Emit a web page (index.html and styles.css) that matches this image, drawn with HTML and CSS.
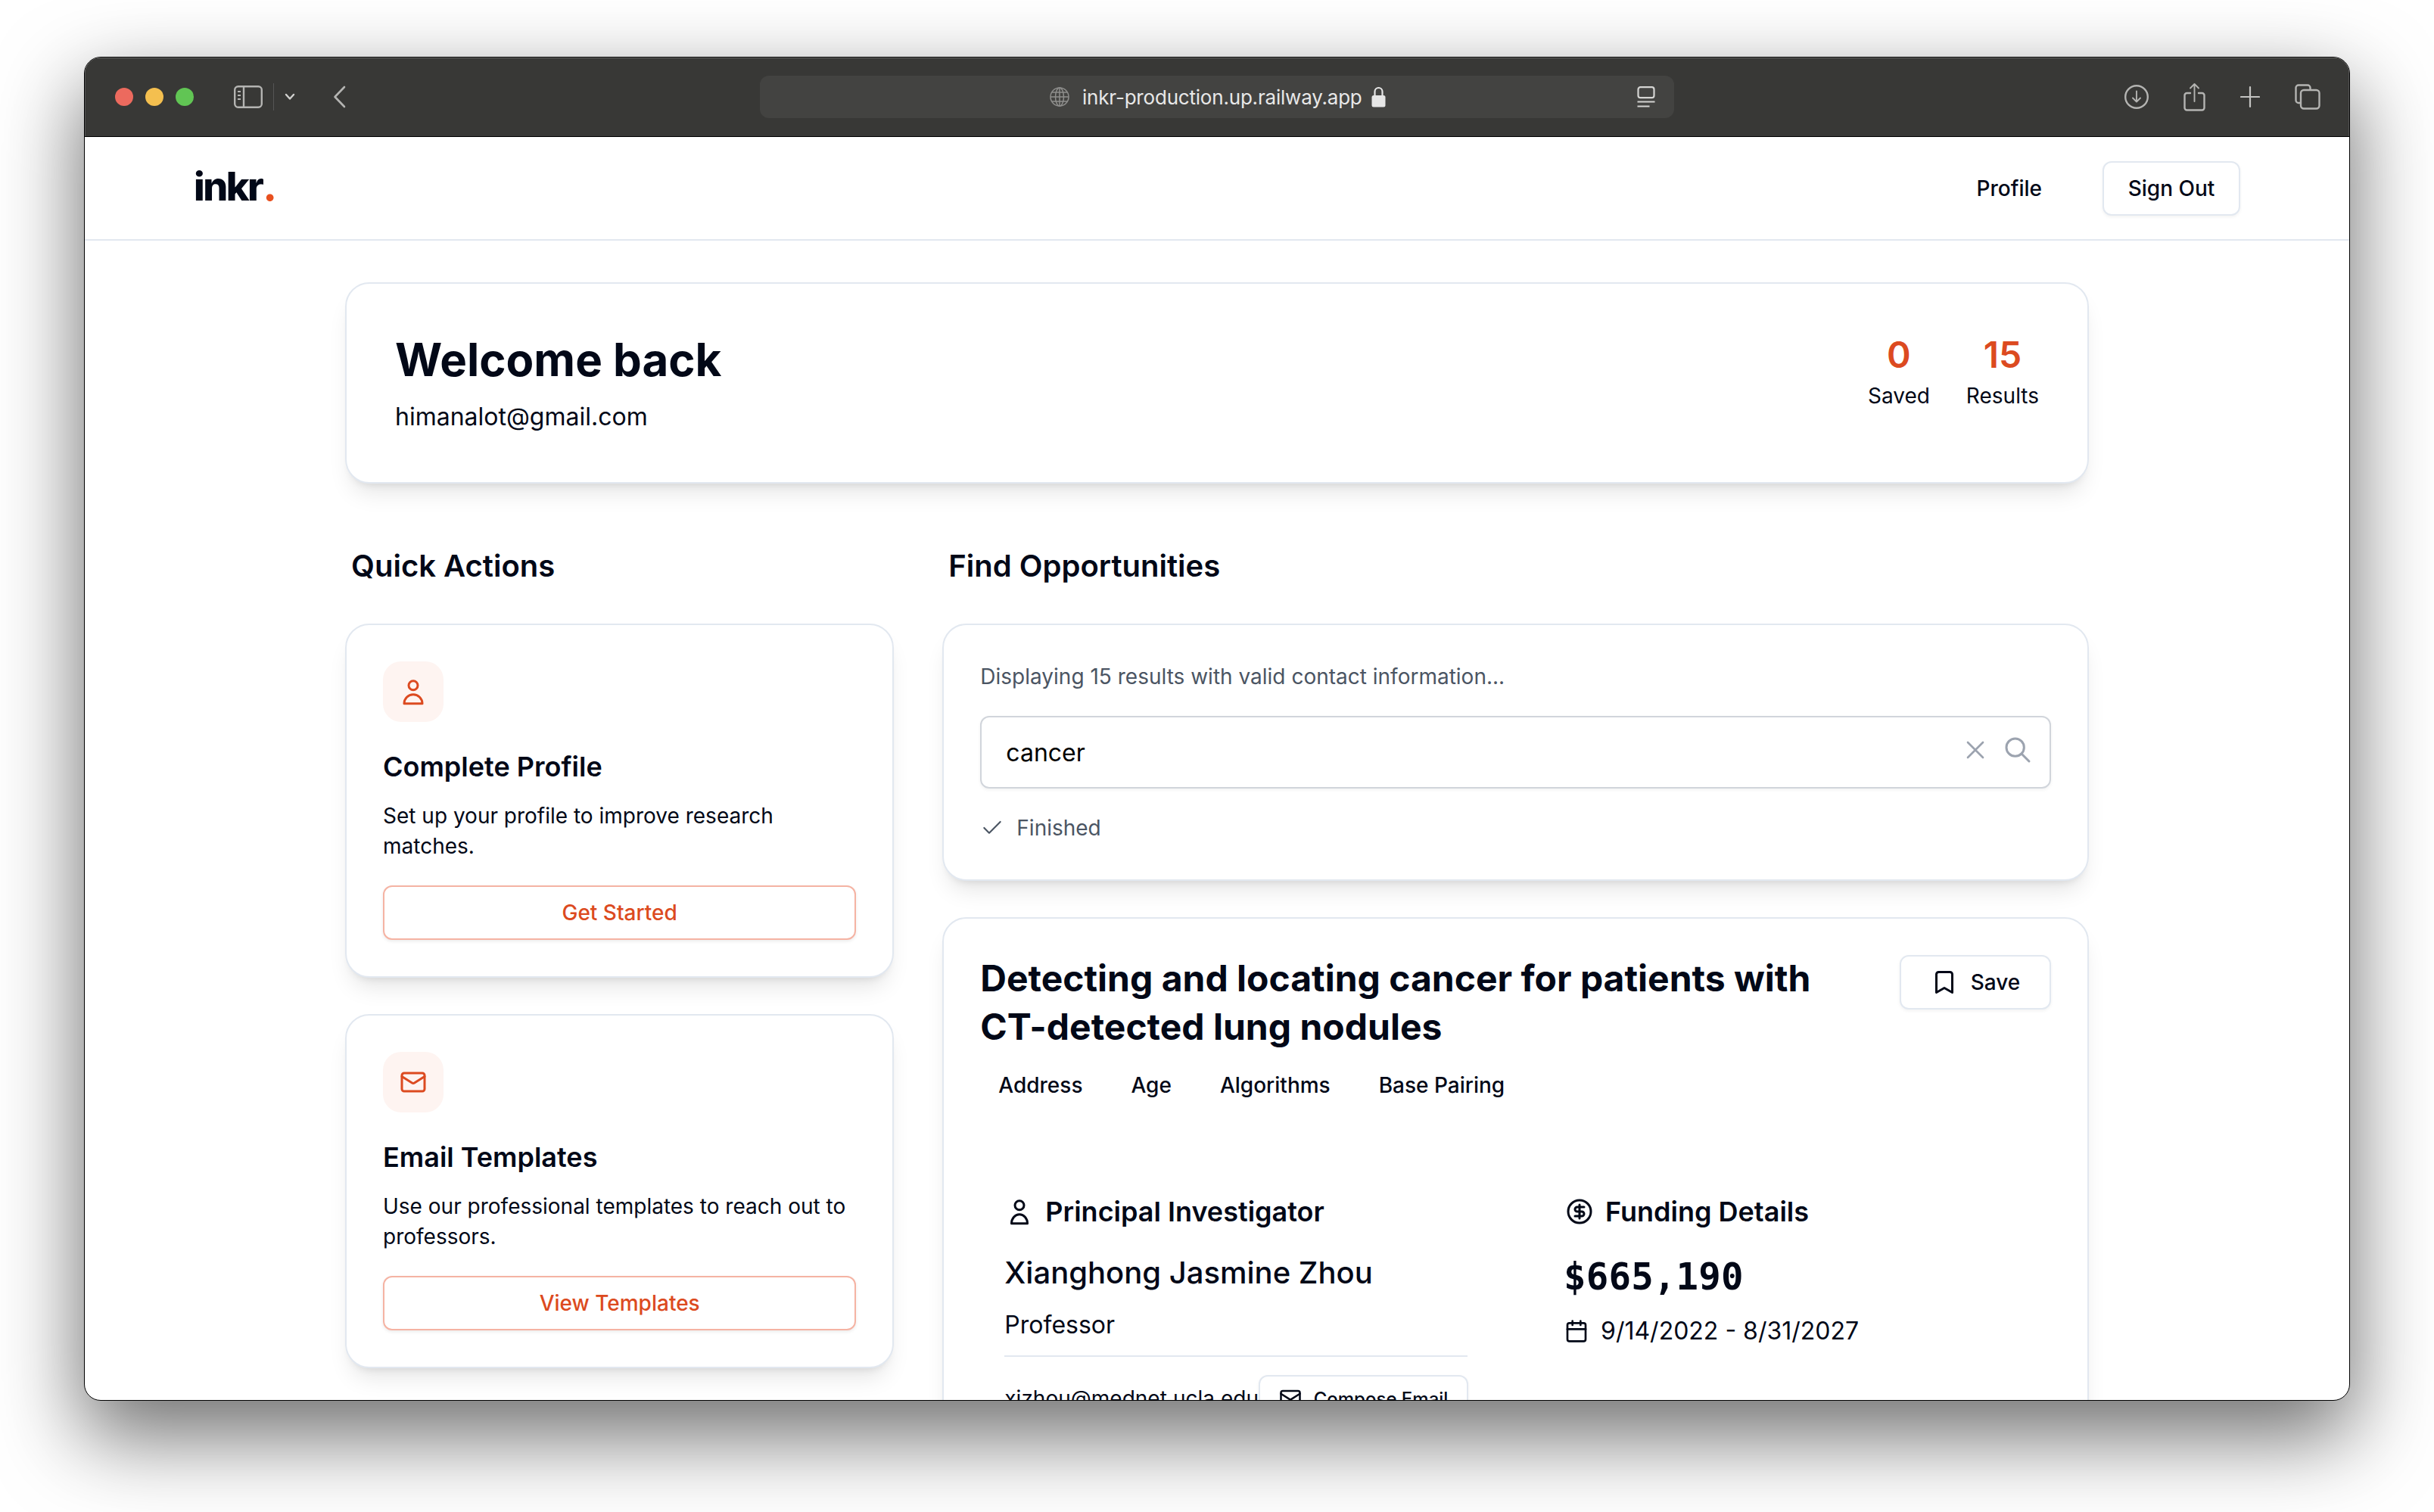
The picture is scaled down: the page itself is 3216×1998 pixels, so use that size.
FILE: index.html
```html
<!DOCTYPE html>
<html lang="en">
<head>
<meta charset="utf-8">
<title>inkr</title>
<link rel="stylesheet" href="styles.css">
</head>
<body>
<div class="window">
  <header class="titlebar">
    <div class="tb-left">
      <span class="light red"></span><span class="light yellow"></span><span class="light green"></span>
      <svg class="tb-sidebar" width="38" height="30" viewBox="0 0 38 30" fill="none" stroke="#b4b4b2" stroke-width="2.4"><rect x="1.2" y="1.2" width="35.6" height="27.6" rx="4.5"/><path d="M13 1.2v27.6"/><path d="M5 8h4M5 13h4M5 18h4" stroke-width="1.8"/></svg>
      <span class="tb-sep"></span>
      <svg class="tb-chevron" width="14" height="10" viewBox="0 0 14 10" fill="none" stroke="#d0d0ce" stroke-width="2.4" stroke-linecap="round" stroke-linejoin="round"><path d="M2 2l5 5.5L12 2"/></svg>
      <svg class="tb-back" width="17" height="30" viewBox="0 0 17 30" fill="none" stroke="#b4b4b2" stroke-width="2.6" stroke-linecap="round" stroke-linejoin="round"><path d="M15 2L2.5 15 15 28"/></svg>
    </div>
    <div class="urlbar">
      <svg class="url-globe" width="26" height="26" viewBox="0 0 26 26" fill="none" stroke="#8e8e8c" stroke-width="1.5"><circle cx="13" cy="13" r="12"/><ellipse cx="13" cy="13" rx="5.5" ry="12"/><path d="M13 1v24M1 13h24M3 7h20M3 19h20"/></svg>
      <span class="url-text">inkr-production.up.railway.app</span>
      <svg class="url-lock" width="19" height="28" viewBox="0 0 19 28" fill="none"><path d="M4.5 13V7a5 5 0 0 1 10 0v6" stroke="#e6e6e6" stroke-width="2.2"/><rect x="0.5" y="12" width="18" height="15.5" rx="2.5" fill="#e6e6e6"/></svg>
      <svg class="url-reader" width="24" height="28" viewBox="0 0 24 28" fill="none" stroke="#d4d4d2" stroke-width="2.2"><rect x="1.5" y="1.2" width="21" height="14" rx="3"/><path d="M0.5 20.5h23M0.5 26.5h16"/></svg>
    </div>
    <div class="tb-right">
      <svg width="32" height="34" viewBox="0 0 32 34" fill="none" stroke="#b4b4b2" stroke-width="2.4" stroke-linecap="round" stroke-linejoin="round"><circle cx="16" cy="17" r="14.8"/><path d="M16 9.5v14M11 18.5l5 5 5-5" stroke-width="1.9"/></svg>
      <svg width="29" height="38" viewBox="0 0 29 38" fill="none" stroke="#b4b4b2" stroke-width="2.4" stroke-linecap="round" stroke-linejoin="round"><path d="M9 14H4.5a3 3 0 0 0-3 3v16.5a3 3 0 0 0 3 3h20a3 3 0 0 0 3-3V17a3 3 0 0 0-3-3H20"/><path d="M14.5 25V2M9 7.5l5.5-5.5L20 7.5" stroke-width="1.9"/></svg>
      <svg width="26" height="30" viewBox="0 0 26 30" fill="none" stroke="#c4c4c2" stroke-width="2.2" stroke-linecap="round"><path d="M13 2v26M1 15h24"/></svg>
      <svg width="34" height="34" viewBox="0 0 34 34" fill="none" stroke="#b4b4b2" stroke-width="2.4"><path d="M8 25H5a3.5 3.5 0 0 1-3.5-3.5V5A3.5 3.5 0 0 1 5 1.5h12A3.5 3.5 0 0 1 20.5 5v3"/><rect x="8" y="8" width="24.5" height="24.5" rx="4"/></svg>
    </div>
  </header>

  <nav class="nav">
    <div class="logo">inkr<span class="logo-dot">.</span></div>
    <div class="nav-actions">
      <a class="nav-link">Profile</a>
      <button class="btn btn-outline btn-signout">Sign Out</button>
    </div>
  </nav>

  <main class="main">
    <section class="card welcome">
      <div>
        <h1 class="welcome-title">Welcome back</h1>
        <p class="welcome-email">himanalot@gmail.com</p>
      </div>
      <div class="stats">
        <div class="stat"><div class="stat-num">0</div><div class="stat-label">Saved</div></div>
        <div class="stat"><div class="stat-num">15</div><div class="stat-label">Results</div></div>
      </div>
    </section>

    <div class="columns">
      <aside class="col">
        <h2 class="section-title">Quick Actions</h2>
        <div class="card action">
          <div class="action-icon">
            <svg width="36" height="36" viewBox="0 0 24 24" fill="none" stroke="#dc4a20" stroke-width="2" stroke-linejoin="round"><circle cx="12" cy="6.5" r="4"/><path d="M4 22.5a8 8 0 0 1 16 0z"/></svg>
          </div>
          <h3 class="action-title">Complete Profile</h3>
          <p class="action-desc">Set up your profile to improve research matches.</p>
          <button class="btn btn-accent">Get Started</button>
        </div>
        <div class="card action">
          <div class="action-icon">
            <svg width="36" height="36" viewBox="0 0 24 24" fill="none" stroke="#dc4a20" stroke-width="2" stroke-linecap="round" stroke-linejoin="round"><rect x="2" y="4" width="20" height="16" rx="2"/><path d="m22 7-8.97 5.7a1.94 1.94 0 0 1-2.06 0L2 7"/></svg>
          </div>
          <h3 class="action-title">Email Templates</h3>
          <p class="action-desc">Use our professional templates to reach out to professors.</p>
          <button class="btn btn-accent">View Templates</button>
        </div>
      </aside>

      <div class="col">
        <h2 class="section-title">Find Opportunities</h2>
        <div class="card search-card">
          <p class="search-note">Displaying 15 results with valid contact information...</p>
          <div class="search-input">
            <span class="search-value">cancer</span>
            <svg class="search-x" width="40" height="40" viewBox="0 0 24 24" fill="none" stroke="#9ca3af" stroke-width="1.6" stroke-linecap="round"><path d="M18 6 6 18M6 6l12 12"/></svg>
            <svg class="search-glass" width="40" height="40" viewBox="0 0 24 24" fill="none" stroke="#9ca3af" stroke-width="1.8" stroke-linecap="round"><circle cx="10" cy="10" r="7"/><path d="m21 21-6-6"/></svg>
          </div>
          <div class="search-status">
            <svg width="32" height="32" viewBox="0 0 24 24" fill="none" stroke="#4b5563" stroke-width="1.6" stroke-linecap="round" stroke-linejoin="round"><path d="M20 6 9 17l-5-5"/></svg>
            <span>Finished</span>
          </div>
        </div>

        <article class="card result">
          <div class="result-head">
            <h3 class="result-title">Detecting and locating cancer for patients with CT-detected lung nodules</h3>
            <button class="btn btn-outline btn-save">
              <svg width="36" height="36" viewBox="0 0 24 24" fill="none" stroke="#020817" stroke-width="2" stroke-linecap="round" stroke-linejoin="round"><path d="m19 21-7-4-7 4V5a2 2 0 0 1 2-2h10a2 2 0 0 1 2 2v16z"/></svg>
              Save
            </button>
          </div>
          <div class="tags">
            <span class="tag">Address</span><span class="tag">Age</span><span class="tag">Algorithms</span><span class="tag">Base Pairing</span>
          </div>
          <div class="result-grid">
            <section class="result-col">
              <h4 class="result-sub">
                <svg width="36" height="36" viewBox="0 0 24 24" fill="none" stroke="#020817" stroke-width="2" stroke-linejoin="round"><circle cx="12" cy="6.5" r="4"/><path d="M5 22.5a7 8 0 0 1 14 0z"/></svg>
                Principal Investigator
              </h4>
              <div class="pi-name">Xianghong Jasmine Zhou</div>
              <div class="pi-role">Professor</div>
              <div class="pi-contact">
                <span class="pi-email">xjzhou@mednet.ucla.edu</span>
                <button class="btn btn-outline btn-compose">
                  <svg width="30" height="30" viewBox="0 0 24 24" fill="none" stroke="#020817" stroke-width="2" stroke-linecap="round" stroke-linejoin="round"><rect x="2" y="4" width="20" height="16" rx="2"/><path d="m22 7-8.97 5.7a1.94 1.94 0 0 1-2.06 0L2 7"/></svg>
                  Compose Email
                </button>
              </div>
            </section>
            <section class="result-col">
              <h4 class="result-sub">
                <svg width="36" height="36" viewBox="0 0 24 24" fill="none" stroke="#020817" stroke-width="2" stroke-linecap="round" stroke-linejoin="round"><circle cx="12" cy="12" r="10"/><path d="M16 8h-6a2 2 0 1 0 0 4h4a2 2 0 1 1 0 4H8"/><path d="M12 18V6"/></svg>
                Funding Details
              </h4>
              <div class="amount">$665,190</div>
              <div class="dates">
                <svg width="32" height="32" viewBox="0 0 24 24" fill="none" stroke="#020817" stroke-width="2" stroke-linecap="round" stroke-linejoin="round"><path d="M8 2v4M16 2v4"/><rect x="3" y="4" width="18" height="18" rx="2"/><path d="M3 10h18"/></svg>
                9/14/2022 - 8/31/2027
              </div>
            </section>
          </div>
        </article>
      </div>
    </div>
  </main>
</div>
</body>
</html>
```
FILE: styles.css
```css
* { box-sizing: border-box; }
html, body { margin: 0; padding: 0; height: 1998px; overflow: hidden; background: #fff; }
body { font-family: "Inter", "Liberation Sans", sans-serif; color: #020817; padding-top: 75px; padding-left: 111px; }
h1, h2, h3, h4, p { margin: 0; }

.window {
  width: 2994px; height: 1776px; border: 1px solid #000; border-radius: 22px;
  overflow: hidden; background: #fff;
  box-shadow: 0 44px 110px 4px rgba(0,0,0,.56);
  display: flex; flex-direction: column;
}

/* browser chrome */
.titlebar {
  flex: none; height: 105px; background: #383836; border-bottom: 1px solid #000;
  box-shadow: inset 0 1px 0 #6a6a68, inset 1px 0 0 #555, inset -1px 0 0 #555;
  display: flex; align-items: center;
}
.tb-left { flex: 0 0 892px; display: flex; align-items: center; padding-left: 40px; }
.light { width: 24px; height: 24px; border-radius: 50%; margin-right: 16px; }
.red { background: #ec6a5e; }
.yellow { background: #f4bf4f; }
.green { background: #61c554; }
.tb-sidebar { margin-left: 37px; }
.tb-sep { width: 1px; height: 36px; background: #555; margin-left: 14px; }
.tb-chevron { margin-left: 14px; }
.tb-back { margin-left: 50px; }
.urlbar {
  flex: 0 0 1208px; height: 56px; background: #434341; border-radius: 12px;
  display: flex; align-items: center; padding: 0 25px 0 383px;
}
.url-text { font-size: 26px; color: #e8e8e8; margin-left: 17px; letter-spacing: -0.2px; }
.url-lock { margin-left: 12px; }
.url-reader { margin-left: auto; }
.tb-right { display: flex; align-items: center; gap: 46px; margin-left: 595px; }

/* nav */
.nav {
  flex: none; height: 137px; border-bottom: 2px solid #e2e8f0;
  display: flex; align-items: center; justify-content: space-between;
  padding: 0 144px;
}
.logo { font-size: 52px; font-weight: 800; letter-spacing: -2.5px; line-height: 1; padding-bottom: 4px; }
.logo-dot { color: #e8501f; margin-left: 1px; }
.nav-actions { display: flex; align-items: center; gap: 80px; }
.nav-link { font-size: 28px; font-weight: 500; }

.btn {
  font-family: inherit; font-size: 28px; font-weight: 500; color: inherit;
  background: #fff; border-radius: 12px; height: 72px; cursor: pointer;
  display: flex; align-items: center; justify-content: center; padding: 0;
}
.btn-outline { border: 2px solid #e2e8f0; box-shadow: 0 2px 4px rgba(0,0,0,.05); }
.btn-signout { width: 182px; }
.btn-accent {
  width: 100%; border: 2px solid #f5b3a3; color: #dc4a20;
  box-shadow: 0 2px 4px rgba(0,0,0,.08);
}

/* main */
.main { flex: 1; width: 2304px; margin: 0 auto; padding-top: 55px; min-height: 0; }
.card {
  background: #fff; border: 2px solid #e2e8f0; border-radius: 32px;
  box-shadow: 0 20px 30px -8px rgba(0,0,0,.10), 0 8px 12px -8px rgba(0,0,0,.12);
}
.welcome {
  height: 266px; padding: 64px; display: flex; justify-content: space-between; align-items: flex-start;
}
.welcome-title { font-size: 60px; line-height: 72px; font-weight: 700; }
.welcome-email { font-size: 32px; line-height: 48px; margin-top: 16px; }
.stats { display: flex; gap: 48px; }
.stat { text-align: center; }
.stat-num { font-size: 48px; line-height: 60px; font-weight: 600; color: #dc4a20; }
.stat-label { font-size: 28px; line-height: 40px; margin-top: 4px; }

.columns { display: grid; grid-template-columns: 725.33px 1514.67px; column-gap: 64px; margin-top: 81px; }
.section-title { font-size: 40px; line-height: 56px; font-weight: 600; padding-left: 8px; margin-bottom: 48px; }

.action { padding: 48px; margin-bottom: 48px; }
.action-icon {
  width: 80px; height: 80px; border-radius: 24px; background: #fef4f1;
  display: flex; align-items: center; justify-content: center;
}
.action-title { font-size: 36px; line-height: 56px; font-weight: 600; margin-top: 31px; }
.action-desc { font-size: 28px; line-height: 40px; margin-top: 17px; margin-bottom: 32px; }

.search-card { padding: 48px; margin-bottom: 48px; }
.search-note { font-size: 28px; line-height: 40px; color: #4b5563; }
.search-input {
  height: 96px; margin-top: 32px; border: 2px solid #d1d5db; border-radius: 12px;
  display: flex; align-items: center; padding: 0 6px 0 32px;
  box-shadow: 0 2px 4px rgba(0,0,0,.05);
}
.search-value { font-size: 32px; color: #000; flex: 1; }
.search-x { margin-right: 16px; margin-top: -6px; }
.search-glass { margin-top: -6px; margin-right: 16px; }
.search-status {
  margin-top: 32px; font-size: 28px; line-height: 40px; color: #4b5563;
  display: flex; align-items: center; gap: 16px; padding-left: 0;
}

.result { padding: 48px; height: 900px; }
.result-head { display: flex; justify-content: space-between; align-items: flex-start; }
.result-title { font-size: 48px; line-height: 64px; font-weight: 700; width: 1150px; margin-top: -1px; }
.btn-save { width: 200px; gap: 17px; }
.tags { display: flex; gap: 16px; margin-top: 23px; }
.tag { font-size: 28px; line-height: 44px; font-weight: 500; padding: 0 24px; }
.result-grid { display: grid; grid-template-columns: 1fr 1fr; column-gap: 64px; margin-top: 85px; }
.result-col { padding: 32px; }
.result-sub { font-size: 36px; line-height: 56px; font-weight: 600; display: flex; align-items: center; gap: 16px; padding-left: 2px; }
.pi-name { font-size: 40px; line-height: 56px; font-weight: 500; margin-top: 25px; }
.pi-role { font-size: 32px; line-height: 48px; margin-top: 17px; padding-bottom: 16px; border-bottom: 2px solid #e2e8f0; }
.pi-contact { display: flex; align-items: center; justify-content: space-between; margin-top: 24px; margin-right: -1px; }
.pi-email { font-size: 28px; }
.btn-compose { height: 62px; width: 277px; font-size: 24px; gap: 16px; }
.amount { font-family: "DejaVu Sans Mono", monospace; font-weight: 700; font-size: 49px; letter-spacing: 0.2px; line-height: 64px; margin-top: 27px; margin-left: -1px; }
.dates { font-size: 32px; line-height: 48px; margin-top: 15px; display: flex; align-items: center; gap: 16px; }
```
